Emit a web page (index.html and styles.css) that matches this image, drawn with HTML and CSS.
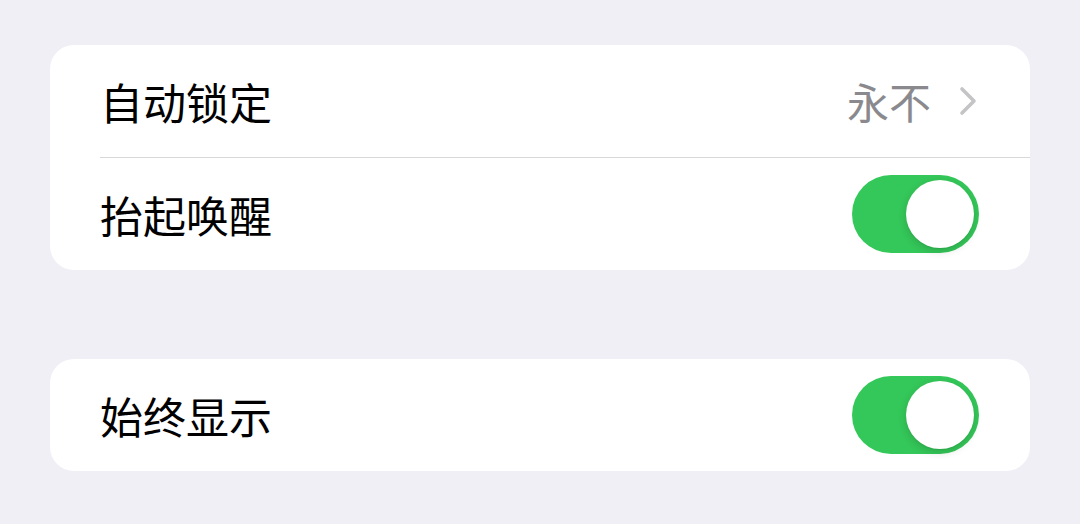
FILE: index.html
```html
<!DOCTYPE html>
<html lang="zh-CN">
<head>
<meta charset="utf-8">
<link rel="stylesheet" href="styles.css">
</head>
<body>
<main class="page">
  <section class="card">
    <div class="row">
      <span class="label">自动锁定</span>
      <span class="detail">
        <span class="value">永不</span>
        <svg class="chevron" width="18" height="30" viewBox="0 0 18 30"><path d="M3 3 L15 15 L3 27" fill="none" stroke="#c4c4c7" stroke-width="3.6" stroke-linecap="round" stroke-linejoin="round"/></svg>
      </span>
    </div>
    <div class="sep"></div>
    <div class="row">
      <span class="label">抬起唤醒</span>
      <span class="toggle"><span class="knob"></span></span>
    </div>
  </section>
  <section class="card">
    <div class="row">
      <span class="label">始终显示</span>
      <span class="toggle"><span class="knob"></span></span>
    </div>
  </section>
</main>
</body>
</html>
```
FILE: styles.css
```css
html, body {
  margin: 0;
  padding: 0;
  background: #f0eff5;
}
body {
  width: 1080px;
  height: 524px;
  overflow: hidden;
  font-family: "Noto Sans CJK SC", "Noto Sans", sans-serif;
}
.page {
  display: flex;
  flex-direction: column;
  gap: 89px;
  padding: 45px 50px 0 50px;
}
.card {
  background: #ffffff;
  border-radius: 24px;
  overflow: hidden;
}
.row {
  height: 112px;
  display: flex;
  align-items: center;
  justify-content: space-between;
  padding: 0 51px 0 50px;
}
.label {
  font-size: 43px;
  color: #000000;
  line-height: 1;
}
.detail {
  display: flex;
  align-items: center;
  gap: 28px;
  padding-right: 2px;
}
.value {
  font-size: 42px;
  color: #8a8a8e;
  line-height: 1;
}
.chevron {
  display: block;
}
.sep {
  height: 1px;
  background: #d8d8dc;
  margin-left: 50px;
}
.toggle {
  width: 127px;
  height: 78px;
  border-radius: 39px;
  background: #34c759;
  display: flex;
  align-items: center;
  justify-content: flex-end;
  padding-right: 5px;
  box-sizing: border-box;
}
.knob {
  width: 68px;
  height: 68px;
  border-radius: 50%;
  background: #ffffff;
  box-shadow: 0 3px 8px rgba(0,0,0,0.15), 0 1px 1px rgba(0,0,0,0.06);
}
```
